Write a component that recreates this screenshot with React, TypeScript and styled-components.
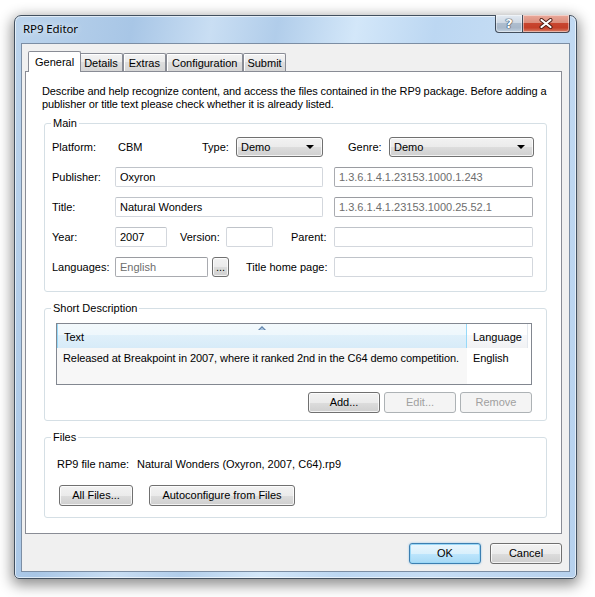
import styled, { createGlobalStyle } from "styled-components";

const GlobalStyle = createGlobalStyle`
  html, body { margin: 0; padding: 0; background: #fff; }
  body {
    font-family: "Liberation Sans", Arial, sans-serif;
    font-size: 11px;
    color: #000;
  }
  * { box-sizing: border-box; }
`;

const Page = styled.div`
  width: 595px;
  height: 597px;
  padding: 15px 0 0 14px;
  overflow: hidden;
`;

const Window = styled.div`
  width: 563px;
  height: 564px;
  display: flex;
  flex-direction: column;
  padding: 0 6px 5px;
  border: 1px solid #42505f;
  border-radius: 7px 7px 5px 5px;
  background:
    linear-gradient(
      100deg,
      #bcd4ec 0%,
      #a8c6e6 18%,
      #c9def3 30%,
      #b1cdea 40%,
      #d3e7f9 52%,
      #bcd7f2 64%,
      #c6ddf4 78%,
      #b6d1ee 100%
    );
  box-shadow: 0 4px 14px 2px rgba(0, 0, 0, 0.45),
    inset 0 0 0 1px rgba(255, 255, 255, 0.6);
`;

const TitleBar = styled.div`
  height: 27px;
  display: flex;
  align-items: flex-start;
`;

const Title = styled.div`
  margin: 5px 0 0 2px;
  flex: 1;
  font-family: "Noto Sans", "Open Sans", sans-serif;
  font-size: 11.5px;
  letter-spacing: -0.1px;
  line-height: 16px;
  color: #000;
  text-shadow: 0 0 6px rgba(255, 255, 255, 0.9);
`;

const CaptionButton = styled.div<{ $close?: boolean }>`
  margin-top: -1px;
  width: ${(p) => (p.$close ? 47 : 28)}px;
  height: 18px;
  display: flex;
  align-items: center;
  justify-content: center;
  border: 1px solid rgba(40, 52, 68, 0.85);
  border-top: none;
  border-left: ${(p) => (p.$close ? "none" : "1px solid rgba(40, 52, 68, 0.85)")};
  border-radius: ${(p) => (p.$close ? "0 0 4px 0" : "0 0 0 4px")};
  background: ${(p) =>
    p.$close
      ? "linear-gradient(#e9a99b 0%, #dc8d7b 45%, #c8452f 50%, #c43f28 75%, #d97f67 100%)"
      : "linear-gradient(#e3eaf2 0%, #cfd9e4 45%, #aebdce 50%, #a8b8ca 75%, #c2d2e2 100%)"};
  box-shadow: inset 0 0 0 1px rgba(255, 255, 255, 0.45);
`;

const HelpGlyph = styled.span`
  font-family: "DejaVu Sans", sans-serif;
  font-weight: bold;
  font-size: 13px;
  line-height: 13px;
  color: #fff;
  text-shadow: 0 0 1px #2c3d52, 0 0 1px #2c3d52, 0 0 1px #2c3d52;
`;

const Client = styled.div`
  border: 1px solid #7c8ea4;
  background: #f0f0f0;
  padding: 7px 7px 7px 0;
  display: flex;
  flex-direction: column;
`;

const TabStrip = styled.div`
  height: 20px;
  display: flex;
  align-items: flex-end;
  padding-left: 8px;
`;

const Tab = styled.div<{ $active?: boolean; $pad?: number }>`
  position: relative;
  z-index: ${(p) => (p.$active ? 1 : 0)};
  height: ${(p) => (p.$active ? 21 : 18)}px;
  margin: ${(p) => (p.$active ? "0 -2px -1px" : "0")};
  padding: ${(p) => (p.$active ? "3px 6px 0" : `2px ${p.$pad ?? 4}px 0`)};
  border: 1px solid #898c95;
  border-bottom: none;
  border-radius: 2px 2px 0 0;
  background: ${(p) =>
    p.$active ? "#fff" : "linear-gradient(#f3f3f3 0%, #ebebeb 50%, #dedede 50%, #d6d6d6 100%)"};
  box-shadow: ${(p) => (p.$active ? "none" : "inset 0 1px 0 #fff, inset 1px 0 0 #fff")};
  line-height: 14px;
  white-space: nowrap;
`;

const Panel = styled.div`
  margin-left: 3px;
  width: 537px;
  height: 463px;
  border: 1px solid #898c95;
  background: #fff;
  padding: 13px 14px 0 16px;
`;

const Intro = styled.p`
  margin: 0 -6px 0 0;
  line-height: 13px;
  letter-spacing: -0.1px;
`;

const Group = styled.fieldset<{ $mt: number }>`
  margin: ${(p) => p.$mt}px 0 0 2px;
  width: 503px;
  min-width: 0;
  border: 1px solid #d5dfe5;
  border-radius: 3px;
  padding: 0;
`;

const Legend = styled.legend`
  margin-left: 6px;
  padding: 0 2px;
  line-height: 13px;
`;

const MainBody = styled.div`
  padding: 7px 0 14px 7px;
  display: flex;
  flex-direction: column;
  gap: 10px;
`;

const Row = styled.div`
  height: 20px;
  display: flex;
  align-items: center;
`;

const Caption = styled.span<{ $w: number; $ml?: number }>`
  flex: none;
  width: ${(p) => p.$w}px;
  margin-left: ${(p) => p.$ml ?? 0}px;
  white-space: nowrap;
`;

const Value = styled.span<{ $w: number }>`
  width: ${(p) => p.$w}px;
  padding-left: 3px;
`;

const TextBox = styled.input<{ $w: number; $ml?: number; $dim?: boolean }>`
  flex: none;
  width: ${(p) => p.$w}px;
  height: 20px;
  margin: 0 0 0 ${(p) => p.$ml ?? 0}px;
  padding: 0 4px;
  border: 1px solid ${(p) => (p.$dim ? "#a9abb0" : "#d3d7dd")};
  border-top-color: ${(p) => (p.$dim ? "#9a9ca1" : "#bfc3c9")};
  border-radius: 2px;
  background: #fff;
  font: inherit;
  color: ${(p) => (p.$dim ? "#6d6d6d" : "#000")};
  outline: none;
`;

const buttonFace = `
  border: 1px solid #707070;
  border-radius: 3px;
  background: linear-gradient(#f2f2f2 0%, #ebebeb 50%, #dddddd 50%, #cfcfcf 100%);
  box-shadow: inset 0 0 0 1px rgba(255, 255, 255, 0.75);
`;

const Combo = styled.div<{ $w: number }>`
  flex: none;
  width: ${(p) => p.$w}px;
  height: 20px;
  display: flex;
  align-items: center;
  justify-content: space-between;
  padding: 0 8px 0 4px;
  ${buttonFace}
`;

const Button = styled.button<{ $w: number; $h?: number; $primary?: boolean; $ml?: number }>`
  flex: none;
  width: ${(p) => p.$w}px;
  height: ${(p) => p.$h ?? 21}px;
  margin: 0 0 0 ${(p) => p.$ml ?? 0}px;
  padding: 0;
  font: inherit;
  color: #000;
  line-height: 1;
  ${buttonFace}
  ${(p) =>
    p.$primary &&
    `
    border-color: #3c7fb1;
    background: linear-gradient(#eaf6fd 0%, #d9f0fc 50%, #bee6fd 50%, #a7d9f5 100%);
    box-shadow: inset 0 0 0 1px #9bd8f7, 0 0 2px rgba(60, 160, 230, 0.6);
  `}
  &:disabled {
    border-color: #adb2b5;
    background: #f4f4f4;
    box-shadow: none;
    color: #a0a0a0;
  }
`;

const DescBody = styled.div`
  padding: 8px 0 7px 11px;
`;

const ListView = styled.div`
  width: 476px;
  height: 62px;
  border: 1px solid #828790;
  background: #fff;
  display: flex;
  flex-direction: column;
`;

const Header = styled.div`
  height: 24px;
  display: flex;
`;

const HeaderCell = styled.div<{ $w: number; $sorted?: boolean }>`
  flex: none;
  width: ${(p) => p.$w}px;
  display: flex;
  flex-direction: column;
  padding: ${(p) => (p.$sorted ? "0" : "6px")} 0 0 6px;
  border-right: 1px solid ${(p) => (p.$sorted ? "#96d9f9" : "#e3e8ee")};
  border-left: ${(p) => (p.$sorted ? "1px solid #96d9f9" : "none")};
  background: ${(p) =>
    p.$sorted
      ? "linear-gradient(#f3f9fc 0%, #eef7fc 45%, #e0f0fa 45%, #d7ebf8 100%)"
      : "linear-gradient(#ffffff 0%, #ffffff 45%, #f7f8fa 45%, #f1f2f4 100%)"};
`;

const SortMark = styled.svg`
  align-self: center;
  margin: 1px 0 0 -6px;
`;

const HeaderText = styled.span`
  line-height: 14px;
`;

const ListBody = styled.div`
  flex: 1;
  background: linear-gradient(to right, #f7f7f7 410px, #fff 410px);
`;

const ListRow = styled.div`
  height: 20px;
  display: flex;
  align-items: center;
`;

const ListCell = styled.span<{ $w: number }>`
  width: ${(p) => p.$w}px;
  padding-left: 6px;
  white-space: nowrap;
  letter-spacing: -0.08px;
`;

const ButtonRow = styled.div<{ $mt: number; $gap: number; $end?: boolean }>`
  margin-top: ${(p) => p.$mt}px;
  display: flex;
  gap: ${(p) => p.$gap}px;
  justify-content: ${(p) => (p.$end ? "flex-end" : "flex-start")};
`;

const DescButtons = styled(ButtonRow)`
  width: 476px;
`;

const FilesBody = styled.div`
  padding: 14px 0 11px 12px;
`;

const FileLine = styled.div`
  display: flex;
  line-height: 13px;
`;

const FileButtons = styled(ButtonRow)`
  padding-left: 2px;
`;

const DropArrow = () => (
  <svg width="8" height="4" viewBox="0 0 8 4">
    <path d="M0 0 H8 L4 4 Z" fill="#000" />
  </svg>
);

const CloseGlyph = () => (
  <svg width="14" height="11" viewBox="0 0 14 11">
    <path d="M2.5 2 L11.5 9 M11.5 2 L2.5 9" stroke="#4a1a12" strokeWidth="4" strokeLinecap="round" />
    <path d="M2.5 2 L11.5 9 M11.5 2 L2.5 9" stroke="#fff" strokeWidth="2.2" strokeLinecap="round" />
  </svg>
);

export default function App() {
  return (
    <>
      <GlobalStyle />
      <Page>
        <Window>
          <TitleBar>
            <Title>RP9 Editor</Title>
            <CaptionButton>
              <HelpGlyph>?</HelpGlyph>
            </CaptionButton>
            <CaptionButton $close>
              <CloseGlyph />
            </CaptionButton>
          </TitleBar>

          <Client>
            <TabStrip>
              <Tab $active>General</Tab>
              <Tab $pad={4}>Details</Tab>
              <Tab $pad={5}>Extras</Tab>
              <Tab $pad={5}>Configuration</Tab>
              <Tab $pad={3}>Submit</Tab>
            </TabStrip>

            <Panel>
              <Intro>
                Describe and help recognize content, and access the files contained in the RP9 package. Before adding a
                publisher or title text please check whether it is already listed.
              </Intro>

              <Group $mt={6}>
                <Legend>Main</Legend>
                <MainBody>
                  <Row>
                    <Caption $w={63}>Platform:</Caption>
                    <Value $w={87}>CBM</Value>
                    <Caption $w={34}>Type:</Caption>
                    <Combo $w={87}>
                      <span>Demo</span>
                      <DropArrow />
                    </Combo>
                    <Caption $w={41} $ml={25}>
                      Genre:
                    </Caption>
                    <Combo $w={145}>
                      <span>Demo</span>
                      <DropArrow />
                    </Combo>
                  </Row>
                  <Row>
                    <Caption $w={63}>Publisher:</Caption>
                    <TextBox $w={208} defaultValue="Oxyron" />
                    <TextBox $w={199} $ml={11} $dim readOnly defaultValue="1.3.6.1.4.1.23153.1000.1.243" />
                  </Row>
                  <Row>
                    <Caption $w={63}>Title:</Caption>
                    <TextBox $w={208} defaultValue="Natural Wonders" />
                    <TextBox $w={199} $ml={11} $dim readOnly defaultValue="1.3.6.1.4.1.23153.1000.25.52.1" />
                  </Row>
                  <Row>
                    <Caption $w={63}>Year:</Caption>
                    <TextBox $w={52} defaultValue="2007" />
                    <Caption $w={46} $ml={13}>
                      Version:
                    </Caption>
                    <TextBox $w={47} />
                    <Caption $w={43} $ml={18}>
                      Parent:
                    </Caption>
                    <TextBox $w={199} />
                  </Row>
                  <Row>
                    <Caption $w={63}>Languages:</Caption>
                    <TextBox $w={93} $dim readOnly defaultValue="English" />
                    <Button $w={17} $h={20} $ml={4}>
                      ...
                    </Button>
                    <Caption $w={88} $ml={17}>
                      Title home page:
                    </Caption>
                    <TextBox $w={199} />
                  </Row>
                </MainBody>
              </Group>

              <Group $mt={10}>
                <Legend>Short Description</Legend>
                <DescBody>
                  <ListView>
                    <Header>
                      <HeaderCell $w={410} $sorted>
                        <SortMark width="8" height="5" viewBox="0 0 8 5">
                          <path d="M0 5 L4 1 L8 5 Z" fill="#5a7ea6" />
                          <path d="M1.5 5 L4 2.5 L6.5 5 Z" fill="#a9c4e0" />
                        </SortMark>
                        <HeaderText>Text</HeaderText>
                      </HeaderCell>
                      <HeaderCell $w={61}>
                        <HeaderText>Language</HeaderText>
                      </HeaderCell>
                    </Header>
                    <ListBody>
                      <ListRow>
                        <ListCell $w={410}>
                          Released at Breakpoint in 2007, where it ranked 2nd in the C64 demo competition.
                        </ListCell>
                        <ListCell $w={61}>English</ListCell>
                      </ListRow>
                    </ListBody>
                  </ListView>
                  <DescButtons $mt={7} $gap={4} $end>
                    <Button $w={72}>Add...</Button>
                    <Button $w={72} disabled>
                      Edit...
                    </Button>
                    <Button $w={72} disabled>
                      Remove
                    </Button>
                  </DescButtons>
                </DescBody>
              </Group>

              <Group $mt={10}>
                <Legend>Files</Legend>
                <FilesBody>
                  <FileLine>
                    <Caption $w={80}>RP9 file name:</Caption>
                    <span>Natural Wonders (Oxyron, 2007, C64).rp9</span>
                  </FileLine>
                  <FileButtons $mt={14} $gap={16}>
                    <Button $w={74}>All Files...</Button>
                    <Button $w={146}>Autoconfigure from Files</Button>
                  </FileButtons>
                </FilesBody>
              </Group>
            </Panel>

            <ButtonRow $mt={9} $gap={9} $end>
              <Button $w={72} $primary>
                OK
              </Button>
              <Button $w={72}>Cancel</Button>
            </ButtonRow>
          </Client>
        </Window>
      </Page>
    </>
  );
}
